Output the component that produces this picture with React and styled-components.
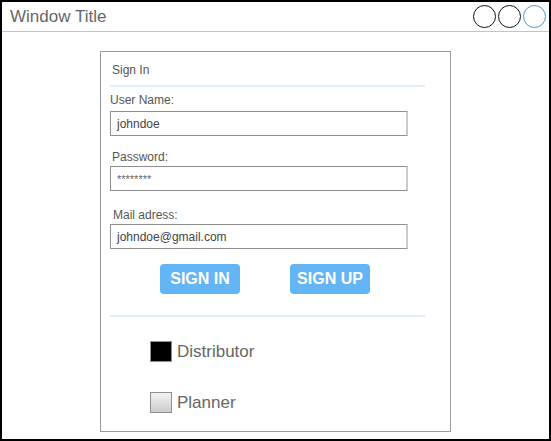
import React from "react";
import styled, { createGlobalStyle } from "styled-components";

const GlobalStyle = createGlobalStyle`
  body {
    margin: 0;
    font-family: "Liberation Sans", Arial, sans-serif;
    background: #fff;
  }
`;

const Window = styled.div`
  width: 551px;
  height: 441px;
  box-sizing: border-box;
  border: 2px solid #000;
  display: flex;
  flex-direction: column;
  background: #fff;
`;

const TitleBar = styled.div`
  height: 29px;
  border-bottom: 1px solid #c4c4c4;
  display: flex;
  align-items: center;
  justify-content: space-between;
  padding: 0 3px 0 8px;
`;

const Title = styled.span`
  font-size: 17px;
  color: #666;
`;

const Controls = styled.div`
  display: flex;
  gap: 2px;
`;

const Circle = styled.span`
  width: 21px;
  height: 21px;
  border-radius: 50%;
  border: 1px solid ${(p) => (p.$active ? "#3d9de3" : "#111")};
`;

const Body = styled.div`
  flex: 1;
  padding: 19px 0 0 98px;
`;

const Panel = styled.div`
  width: 351px;
  height: 381px;
  box-sizing: border-box;
  border: 1px solid #9a9a9a;
  padding-left: 9px;
  display: flex;
  flex-direction: column;
`;

const Heading = styled.div`
  margin-top: 11px;
  padding-left: 2px;
  font-size: 12px;
  line-height: 14px;
  color: #555;
`;

const Divider = styled.div`
  margin-top: ${(p) => p.$top}px;
  width: 315px;
  height: 2px;
  background: #e2eefb;
`;

const Label = styled.label`
  margin-top: ${(p) => p.$top}px;
  padding-left: ${(p) => p.$indent || 0}px;
  font-size: 12px;
  line-height: 14px;
  color: #555;
`;

const Field = styled.div`
  margin-top: ${(p) => p.$top}px;
  width: 298px;
  height: 25px;
  box-sizing: border-box;
  border: 1px solid #8e8e8e;
  border-right: 2px solid #cacaca;
  display: flex;
  align-items: center;
  padding-left: 6px;
  font-size: ${(p) => (p.$secret ? "11px" : "12px")};
  color: ${(p) => (p.$secret ? "#666" : "#444")};
`;

const ButtonRow = styled.div`
  margin-top: 15px;
  padding-left: 50px;
  display: flex;
  gap: 50px;
`;

const Button = styled.button`
  width: 80px;
  height: 30px;
  border: none;
  border-radius: 4px;
  background: #64b5f6;
  color: #fff;
  font-family: "Liberation Sans", Arial, sans-serif;
  font-weight: bold;
  font-size: 16px;
  padding: 0;
`;

const Options = styled.div`
  margin-top: 24px;
  padding-left: 40px;
  display: flex;
  flex-direction: column;
  gap: 30px;
`;

const Option = styled.div`
  display: flex;
  align-items: center;
  gap: 5px;
  height: 21px;
`;

const Box = styled.span`
  width: 22px;
  height: 21px;
  box-sizing: border-box;
  border: 1px solid #8f8f8f;
  background: ${(p) =>
    p.$checked ? "#000" : "linear-gradient(#f2f2f2, #cdcdcd)"};
`;

const OptionText = styled.span`
  font-size: 17px;
  color: #666;
`;

export default function App() {
  return (
    <>
      <GlobalStyle />
      <Window>
        <TitleBar>
          <Title>Window Title</Title>
          <Controls>
            <Circle />
            <Circle />
            <Circle $active />
          </Controls>
        </TitleBar>
        <Body>
          <Panel>
            <Heading>Sign In</Heading>
            <Divider $top={8} />
            <Label $top={6}>User Name:</Label>
            <Field $top={4}>johndoe</Field>
            <Label $top={14} $indent={2}>
              Password:
            </Label>
            <Field $top={2} $secret>
              ********
            </Field>
            <Label $top={17} $indent={3}>
              Mail adress:
            </Label>
            <Field $top={2}>johndoe@gmail.com</Field>
            <ButtonRow>
              <Button>SIGN IN</Button>
              <Button>SIGN UP</Button>
            </ButtonRow>
            <Divider $top={21} />
            <Options>
              <Option>
                <Box $checked />
                <OptionText>Distributor</OptionText>
              </Option>
              <Option>
                <Box />
                <OptionText>Planner</OptionText>
              </Option>
            </Options>
          </Panel>
        </Body>
      </Window>
    </>
  );
}
